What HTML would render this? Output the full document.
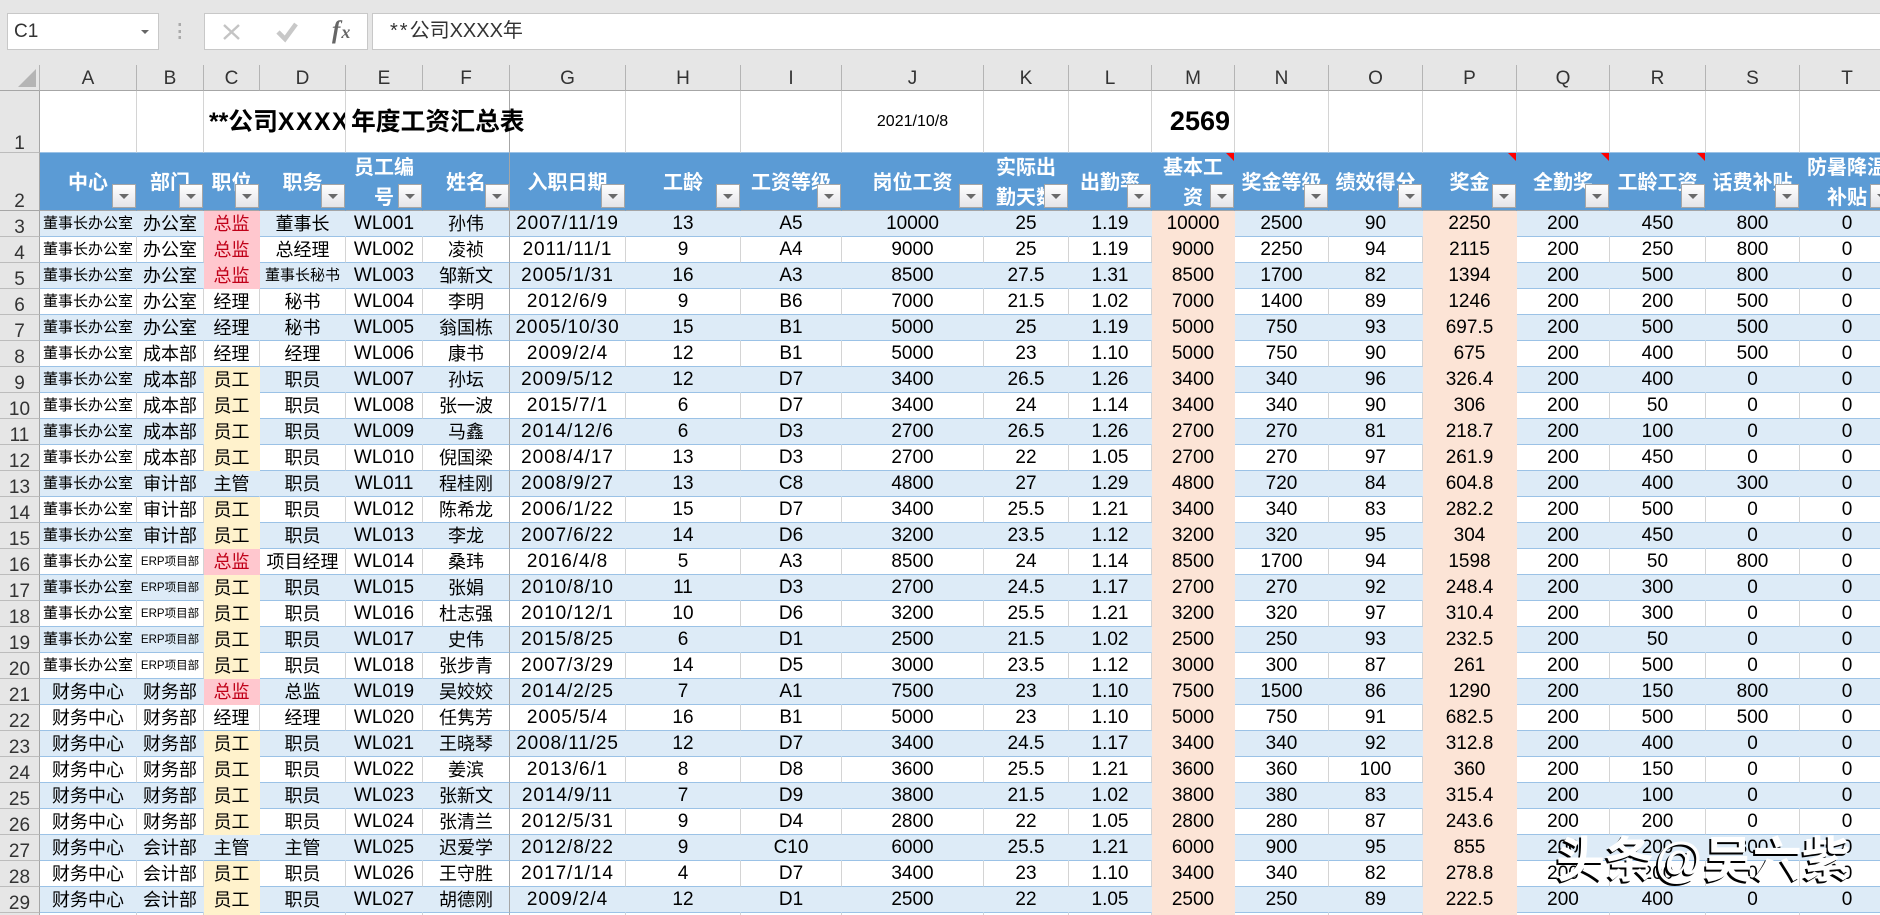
<!DOCTYPE html>
<html lang="zh"><head><meta charset="utf-8"><title>Excel</title>
<style>
html,body{margin:0;padding:0;width:1880px;height:915px;overflow:hidden;background:#e6e6e6;font-family:"Liberation Sans","Noto Sans CJK SC",sans-serif;color:#000}
#p{position:relative;width:1880px;height:915px;overflow:hidden;background:#e6e6e6}
.box{position:absolute;background:#fff;border:1px solid #c8c8c8;box-sizing:border-box}
table{position:absolute;left:0;top:65px;border-collapse:separate;border-spacing:0;table-layout:fixed;width:1895px}
td,th{box-sizing:border-box;padding:0;overflow:hidden;white-space:nowrap;text-align:center;font-weight:400}
thead th{height:26px;background:#e6e6e6;border-right:1px solid #b4b4b4;border-bottom:1px solid #a6a6a6;font-size:19px;line-height:22px;padding-top:3px;color:#333}
tbody th{background:#e6e6e6;border-right:1px solid #a6a6a6;border-bottom:1px solid #bcbcbc;font-size:19px;line-height:16px;vertical-align:bottom;color:#333}
tr.t td{height:62px;background:#fff;border-right:1px solid #d4d4d4;border-bottom:1px solid #9bc2e6;font-size:16px}
tr.t td.m{font-size:27px;font-weight:700;text-align:right;padding-right:4px}
tr.h th{height:58px;border-bottom-color:#a6a6a6}
tr.h td{position:relative;height:58px;background:#5b9bd5;border-right:1px solid #5b9bd5;border-bottom:1px solid #a6a6a6;color:#fff;font-weight:700;font-size:20px;line-height:30px;padding-top:2px}
.w{display:block;margin:-2px 0 -3px}
.d td{height:26px;background:#fff;border-right:1px solid #d4d4d4;border-bottom:1px solid #9bc2e6;font-size:19px;line-height:24px;padding-top:1px}
.d th{height:26px}
.d tr.o td{background:#ddebf7;border-right-color:#ddebf7}
.d td:nth-child(2),.d td:nth-child(3),.d td:nth-child(4),.d td:nth-child(5),.d td:nth-child(7){font-size:18px}
.d td:nth-child(8){letter-spacing:.9px}
.d td.s,.d td:nth-child(2).s,.d td:nth-child(5).s{font-size:15px}
.d td.e,.d td:nth-child(3).e{font-size:11.5px}
.d td:nth-child(14),.d td:nth-child(17),.d tr.o td:nth-child(14),.d tr.o td:nth-child(17){background:#fce4d6;border-right-color:#fce4d6;border-bottom-color:#fce4d6}
.d td.r,.d tr.o td.r{background:#ffc7ce;color:#c00018;border-right-color:#ffc7ce;border-bottom-color:#ffc7ce}
.d td.y,.d tr.o td.y{background:#fff2cc;border-right-color:#fff2cc;border-bottom-color:#fff2cc}
.d td:nth-child(7),.d tr.o td:nth-child(7),tr.h td:nth-child(7),tr.t td.fz{border-right:1px solid #a6a6a6}
.f{position:absolute;right:0;bottom:2px;width:24px;height:24px;box-sizing:border-box;border:1px solid #a6a6a6;background:linear-gradient(#fff,#e4e4e8)}
.f:after{content:"";position:absolute;left:6px;top:9px;border-left:5px solid transparent;border-right:5px solid transparent;border-top:5px solid #6a6a6a}
.c{position:absolute;right:0;top:0;width:0;height:0;border-top:8px solid #f00;border-left:8px solid transparent}
.ti{position:absolute;top:106px;height:34px;line-height:34px;font-size:24.8px;font-weight:700;white-space:nowrap;overflow:hidden}
.wm{position:absolute;left:1556px;top:829px;font-size:49px;line-height:64px;color:#fff;font-weight:700;text-shadow:-2px 2px 0 #000;white-space:nowrap}
.wm span{font-weight:400}
</style></head><body>
<div id="p">
<div class="box" style="left:7px;top:13px;width:152px;height:37px"><span style="position:absolute;left:6px;top:6px;font-size:19px;line-height:24px;color:#333">C1</span><span style="position:absolute;left:133px;top:16px;border-left:4px solid transparent;border-right:4px solid transparent;border-top:4px solid #666"></span></div>
<svg style="position:absolute;left:176px;top:20px" width="8" height="22"><rect x="2.5" y="3" width="2.5" height="3" fill="#aaa"/><rect x="2.5" y="10" width="2.5" height="3" fill="#aaa"/><rect x="2.5" y="16" width="2.5" height="3" fill="#aaa"/></svg>
<div class="box" style="left:204px;top:13px;width:164px;height:37px"></div>
<svg style="position:absolute;left:204px;top:13px" width="164" height="37"><path d="M20 12L35 26M35 12L20 26" stroke="#c4c4c4" stroke-width="2.4" fill="none"/><path d="M74 19L81 26L92 11" stroke="#c8c8c8" stroke-width="4.6" fill="none"/><text x="128" y="25" font-family="Liberation Serif" font-style="italic" font-weight="700" font-size="25" fill="#666">f<tspan font-size="18" dx="1">x</tspan></text></svg>
<div class="box" style="left:372px;top:13px;width:1520px;height:37px"><span style="position:absolute;left:17px;top:4px;font-size:20px;line-height:26px;color:#333"><span style="letter-spacing:2px">**</span>公司XXXX年</span></div>
<table>
<colgroup><col style="width:40px"><col style="width:97px"><col style="width:67px"><col style="width:56px"><col style="width:86px"><col style="width:77px"><col style="width:87px"><col style="width:116px"><col style="width:115px"><col style="width:101px"><col style="width:142px"><col style="width:85px"><col style="width:83px"><col style="width:83px"><col style="width:94px"><col style="width:94px"><col style="width:94px"><col style="width:93px"><col style="width:96px"><col style="width:94px"><col style="width:95px"></colgroup>
<thead><tr><th></th><th>A</th><th>B</th><th>C</th><th>D</th><th>E</th><th>F</th><th>G</th><th>H</th><th>I</th><th>J</th><th>K</th><th>L</th><th>M</th><th>N</th><th>O</th><th>P</th><th>Q</th><th>R</th><th>S</th><th>T</th></tr></thead>
<tbody>
<tr class="t"><th>1</th><td></td><td></td><td colspan="2"></td><td colspan="2" class="fz"></td><td></td><td></td><td></td><td>2021/10/8</td><td></td><td></td><td class="m">2569</td><td></td><td></td><td></td><td></td><td></td><td></td><td></td></tr>
<tr class="h"><th>2</th><td>中心<i class="f"></i></td><td>部门<i class="f"></i></td><td>职位<i class="f"></i></td><td>职务<i class="f"></i></td><td><span class="w">员工编<br>号</span><i class="f"></i></td><td>姓名<i class="f"></i></td><td>入职日期<i class="f"></i></td><td>工龄<i class="f"></i></td><td>工资等级<i class="f"></i></td><td>岗位工资<i class="f"></i></td><td><span class="w">实际出<br>勤天数</span><i class="f"></i></td><td>出勤率<i class="f"></i></td><td><span class="w">基本工<br>资</span><i class="c"></i><i class="f"></i></td><td>奖金等级<i class="f"></i></td><td>绩效得分<i class="f"></i></td><td>奖金<i class="c"></i><i class="f"></i></td><td>全勤奖<i class="c"></i><i class="f"></i></td><td>工龄工资<i class="c"></i><i class="f"></i></td><td>话费补贴<i class="f"></i></td><td><span class="w">防暑降温<br>补贴</span><i class="f"></i></td></tr>
</tbody>
<tbody class="d">
<tr class="o"><th>3</th><td class="s">董事长办公室</td><td>办公室</td><td class="r">总监</td><td>董事长</td><td>WL001</td><td>孙伟</td><td>2007/11/19</td><td>13</td><td>A5</td><td>10000</td><td>25</td><td>1.19</td><td>10000</td><td>2500</td><td>90</td><td>2250</td><td>200</td><td>450</td><td>800</td><td>0</td></tr>
<tr><th>4</th><td class="s">董事长办公室</td><td>办公室</td><td class="r">总监</td><td>总经理</td><td>WL002</td><td>凌祯</td><td>2011/11/1</td><td>9</td><td>A4</td><td>9000</td><td>25</td><td>1.19</td><td>9000</td><td>2250</td><td>94</td><td>2115</td><td>200</td><td>250</td><td>800</td><td>0</td></tr>
<tr class="o"><th>5</th><td class="s">董事长办公室</td><td>办公室</td><td class="r">总监</td><td class="s">董事长秘书</td><td>WL003</td><td>邹新文</td><td>2005/1/31</td><td>16</td><td>A3</td><td>8500</td><td>27.5</td><td>1.31</td><td>8500</td><td>1700</td><td>82</td><td>1394</td><td>200</td><td>500</td><td>800</td><td>0</td></tr>
<tr><th>6</th><td class="s">董事长办公室</td><td>办公室</td><td>经理</td><td>秘书</td><td>WL004</td><td>李明</td><td>2012/6/9</td><td>9</td><td>B6</td><td>7000</td><td>21.5</td><td>1.02</td><td>7000</td><td>1400</td><td>89</td><td>1246</td><td>200</td><td>200</td><td>500</td><td>0</td></tr>
<tr class="o"><th>7</th><td class="s">董事长办公室</td><td>办公室</td><td>经理</td><td>秘书</td><td>WL005</td><td>翁国栋</td><td>2005/10/30</td><td>15</td><td>B1</td><td>5000</td><td>25</td><td>1.19</td><td>5000</td><td>750</td><td>93</td><td>697.5</td><td>200</td><td>500</td><td>500</td><td>0</td></tr>
<tr><th>8</th><td class="s">董事长办公室</td><td>成本部</td><td>经理</td><td>经理</td><td>WL006</td><td>康书</td><td>2009/2/4</td><td>12</td><td>B1</td><td>5000</td><td>23</td><td>1.10</td><td>5000</td><td>750</td><td>90</td><td>675</td><td>200</td><td>400</td><td>500</td><td>0</td></tr>
<tr class="o"><th>9</th><td class="s">董事长办公室</td><td>成本部</td><td class="y">员工</td><td>职员</td><td>WL007</td><td>孙坛</td><td>2009/5/12</td><td>12</td><td>D7</td><td>3400</td><td>26.5</td><td>1.26</td><td>3400</td><td>340</td><td>96</td><td>326.4</td><td>200</td><td>400</td><td>0</td><td>0</td></tr>
<tr><th>10</th><td class="s">董事长办公室</td><td>成本部</td><td class="y">员工</td><td>职员</td><td>WL008</td><td>张一波</td><td>2015/7/1</td><td>6</td><td>D7</td><td>3400</td><td>24</td><td>1.14</td><td>3400</td><td>340</td><td>90</td><td>306</td><td>200</td><td>50</td><td>0</td><td>0</td></tr>
<tr class="o"><th>11</th><td class="s">董事长办公室</td><td>成本部</td><td class="y">员工</td><td>职员</td><td>WL009</td><td>马鑫</td><td>2014/12/6</td><td>6</td><td>D3</td><td>2700</td><td>26.5</td><td>1.26</td><td>2700</td><td>270</td><td>81</td><td>218.7</td><td>200</td><td>100</td><td>0</td><td>0</td></tr>
<tr><th>12</th><td class="s">董事长办公室</td><td>成本部</td><td class="y">员工</td><td>职员</td><td>WL010</td><td>倪国梁</td><td>2008/4/17</td><td>13</td><td>D3</td><td>2700</td><td>22</td><td>1.05</td><td>2700</td><td>270</td><td>97</td><td>261.9</td><td>200</td><td>450</td><td>0</td><td>0</td></tr>
<tr class="o"><th>13</th><td class="s">董事长办公室</td><td>审计部</td><td>主管</td><td>职员</td><td>WL011</td><td>程桂刚</td><td>2008/9/27</td><td>13</td><td>C8</td><td>4800</td><td>27</td><td>1.29</td><td>4800</td><td>720</td><td>84</td><td>604.8</td><td>200</td><td>400</td><td>300</td><td>0</td></tr>
<tr><th>14</th><td class="s">董事长办公室</td><td>审计部</td><td class="y">员工</td><td>职员</td><td>WL012</td><td>陈希龙</td><td>2006/1/22</td><td>15</td><td>D7</td><td>3400</td><td>25.5</td><td>1.21</td><td>3400</td><td>340</td><td>83</td><td>282.2</td><td>200</td><td>500</td><td>0</td><td>0</td></tr>
<tr class="o"><th>15</th><td class="s">董事长办公室</td><td>审计部</td><td class="y">员工</td><td>职员</td><td>WL013</td><td>李龙</td><td>2007/6/22</td><td>14</td><td>D6</td><td>3200</td><td>23.5</td><td>1.12</td><td>3200</td><td>320</td><td>95</td><td>304</td><td>200</td><td>450</td><td>0</td><td>0</td></tr>
<tr><th>16</th><td class="s">董事长办公室</td><td class="e">ERP项目部</td><td class="r">总监</td><td>项目经理</td><td>WL014</td><td>桑玮</td><td>2016/4/8</td><td>5</td><td>A3</td><td>8500</td><td>24</td><td>1.14</td><td>8500</td><td>1700</td><td>94</td><td>1598</td><td>200</td><td>50</td><td>800</td><td>0</td></tr>
<tr class="o"><th>17</th><td class="s">董事长办公室</td><td class="e">ERP项目部</td><td class="y">员工</td><td>职员</td><td>WL015</td><td>张娟</td><td>2010/8/10</td><td>11</td><td>D3</td><td>2700</td><td>24.5</td><td>1.17</td><td>2700</td><td>270</td><td>92</td><td>248.4</td><td>200</td><td>300</td><td>0</td><td>0</td></tr>
<tr><th>18</th><td class="s">董事长办公室</td><td class="e">ERP项目部</td><td class="y">员工</td><td>职员</td><td>WL016</td><td>杜志强</td><td>2010/12/1</td><td>10</td><td>D6</td><td>3200</td><td>25.5</td><td>1.21</td><td>3200</td><td>320</td><td>97</td><td>310.4</td><td>200</td><td>300</td><td>0</td><td>0</td></tr>
<tr class="o"><th>19</th><td class="s">董事长办公室</td><td class="e">ERP项目部</td><td class="y">员工</td><td>职员</td><td>WL017</td><td>史伟</td><td>2015/8/25</td><td>6</td><td>D1</td><td>2500</td><td>21.5</td><td>1.02</td><td>2500</td><td>250</td><td>93</td><td>232.5</td><td>200</td><td>50</td><td>0</td><td>0</td></tr>
<tr><th>20</th><td class="s">董事长办公室</td><td class="e">ERP项目部</td><td class="y">员工</td><td>职员</td><td>WL018</td><td>张步青</td><td>2007/3/29</td><td>14</td><td>D5</td><td>3000</td><td>23.5</td><td>1.12</td><td>3000</td><td>300</td><td>87</td><td>261</td><td>200</td><td>500</td><td>0</td><td>0</td></tr>
<tr class="o"><th>21</th><td>财务中心</td><td>财务部</td><td class="r">总监</td><td>总监</td><td>WL019</td><td>吴姣姣</td><td>2014/2/25</td><td>7</td><td>A1</td><td>7500</td><td>23</td><td>1.10</td><td>7500</td><td>1500</td><td>86</td><td>1290</td><td>200</td><td>150</td><td>800</td><td>0</td></tr>
<tr><th>22</th><td>财务中心</td><td>财务部</td><td>经理</td><td>经理</td><td>WL020</td><td>任隽芳</td><td>2005/5/4</td><td>16</td><td>B1</td><td>5000</td><td>23</td><td>1.10</td><td>5000</td><td>750</td><td>91</td><td>682.5</td><td>200</td><td>500</td><td>500</td><td>0</td></tr>
<tr class="o"><th>23</th><td>财务中心</td><td>财务部</td><td class="y">员工</td><td>职员</td><td>WL021</td><td>王晓琴</td><td>2008/11/25</td><td>12</td><td>D7</td><td>3400</td><td>24.5</td><td>1.17</td><td>3400</td><td>340</td><td>92</td><td>312.8</td><td>200</td><td>400</td><td>0</td><td>0</td></tr>
<tr><th>24</th><td>财务中心</td><td>财务部</td><td class="y">员工</td><td>职员</td><td>WL022</td><td>姜滨</td><td>2013/6/1</td><td>8</td><td>D8</td><td>3600</td><td>25.5</td><td>1.21</td><td>3600</td><td>360</td><td>100</td><td>360</td><td>200</td><td>150</td><td>0</td><td>0</td></tr>
<tr class="o"><th>25</th><td>财务中心</td><td>财务部</td><td class="y">员工</td><td>职员</td><td>WL023</td><td>张新文</td><td>2014/9/11</td><td>7</td><td>D9</td><td>3800</td><td>21.5</td><td>1.02</td><td>3800</td><td>380</td><td>83</td><td>315.4</td><td>200</td><td>100</td><td>0</td><td>0</td></tr>
<tr><th>26</th><td>财务中心</td><td>财务部</td><td class="y">员工</td><td>职员</td><td>WL024</td><td>张清兰</td><td>2012/5/31</td><td>9</td><td>D4</td><td>2800</td><td>22</td><td>1.05</td><td>2800</td><td>280</td><td>87</td><td>243.6</td><td>200</td><td>200</td><td>0</td><td>0</td></tr>
<tr class="o"><th>27</th><td>财务中心</td><td>会计部</td><td>主管</td><td>主管</td><td>WL025</td><td>迟爱学</td><td>2012/8/22</td><td>9</td><td>C10</td><td>6000</td><td>25.5</td><td>1.21</td><td>6000</td><td>900</td><td>95</td><td>855</td><td>200</td><td>200</td><td>300</td><td>0</td></tr>
<tr><th>28</th><td>财务中心</td><td>会计部</td><td class="y">员工</td><td>职员</td><td>WL026</td><td>王守胜</td><td>2017/1/14</td><td>4</td><td>D7</td><td>3400</td><td>23</td><td>1.10</td><td>3400</td><td>340</td><td>82</td><td>278.8</td><td>200</td><td>200</td><td>0</td><td>0</td></tr>
<tr class="o"><th>29</th><td>财务中心</td><td>会计部</td><td class="y">员工</td><td>职员</td><td>WL027</td><td>胡德刚</td><td>2009/2/4</td><td>12</td><td>D1</td><td>2500</td><td>22</td><td>1.05</td><td>2500</td><td>250</td><td>89</td><td>222.5</td><td>200</td><td>400</td><td>0</td><td>0</td></tr>
<tr><th></th><td></td><td></td><td class="y"></td><td></td><td></td><td></td><td></td><td></td><td></td><td></td><td></td><td></td><td></td><td></td><td></td><td></td><td></td><td></td><td></td><td></td></tr>
</tbody>
</table>
<svg style="position:absolute;left:0;top:65px" width="40" height="26"><polygon points="18,22 36,22 36,4" fill="#b4b4b4"/></svg>
<div class="ti" style="left:209px;width:136px">**公司<span style="letter-spacing:1.5px">XXXX</span></div>
<div class="ti" style="left:351px">年度工资汇总表</div>
<div class="wm">头条<span>@</span>吴六紫</div>
</div>
</body></html>
